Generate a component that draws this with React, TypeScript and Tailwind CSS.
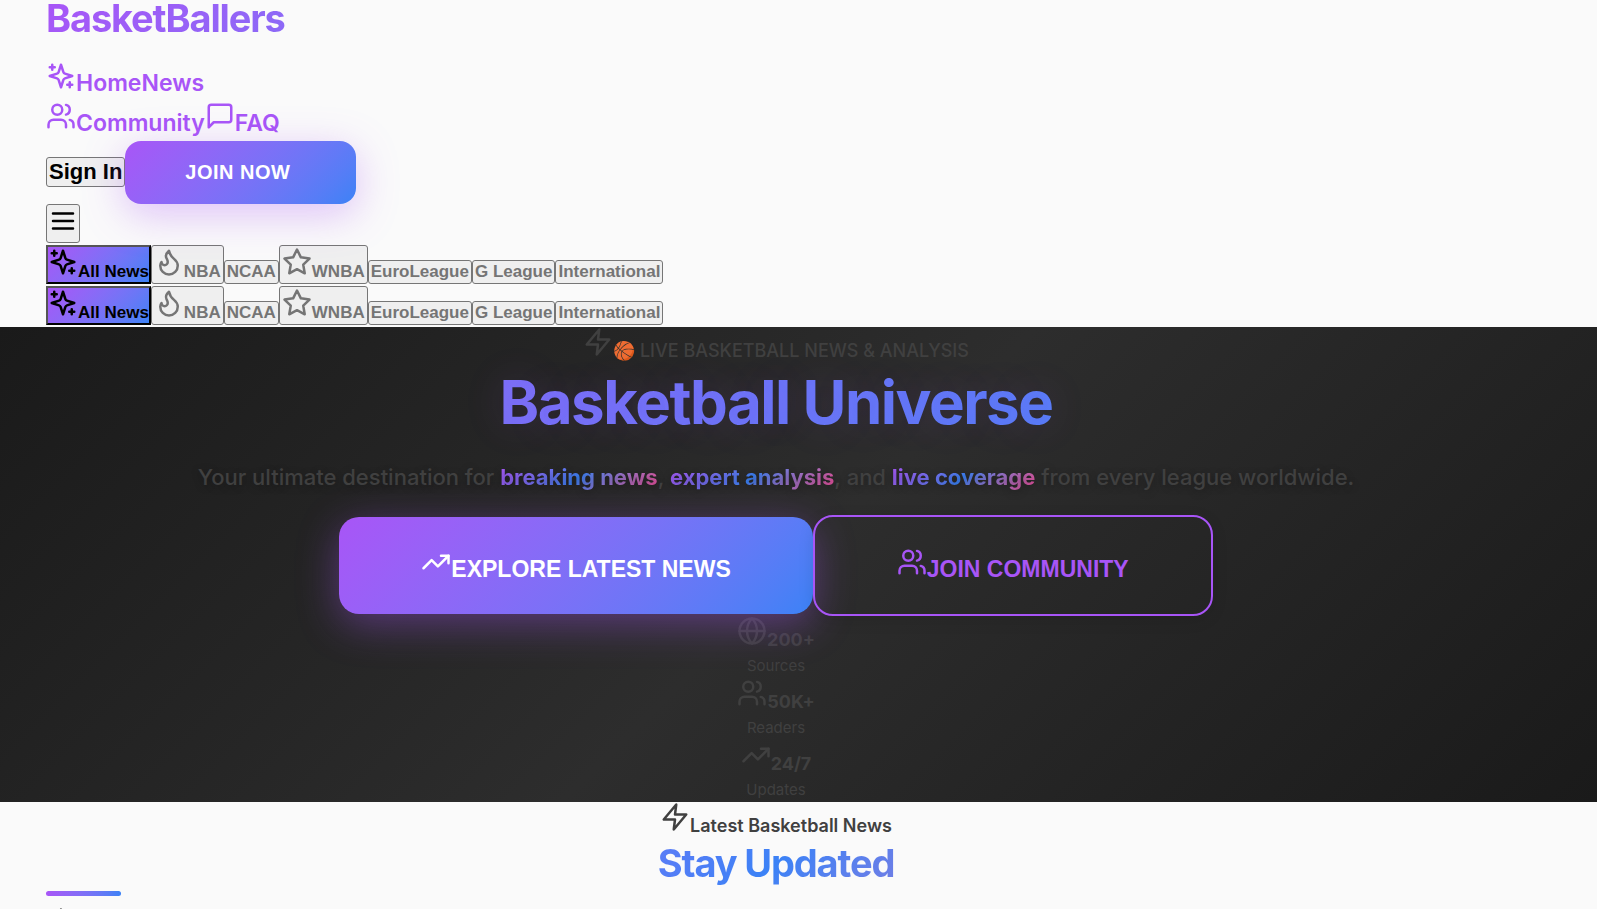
import type { ReactNode } from "react";
import { Globe, TrendingUp, Users } from "lucide-react";

function Icon({ children }: { children: ReactNode }) {
  return (
    <svg
      width={30}
      height={30}
      viewBox="0 0 24 24"
      fill="none"
      stroke="currentColor"
      strokeWidth={2}
      strokeLinecap="round"
      strokeLinejoin="round"
      aria-hidden="true"
      className="inline-block align-baseline"
    >
      {children}
    </svg>
  );
}

const Sparkles = () => (
  <Icon>
    <path d="m12 3-1.912 5.813a2 2 0 0 1-1.275 1.275L3 12l5.813 1.912a2 2 0 0 1 1.275 1.275L12 21l1.912-5.813a2 2 0 0 1 1.275-1.275L21 12l-5.813-1.912a2 2 0 0 1-1.275-1.275L12 3Z" />
    <path d="M5 3v4M19 17v4M3 5h4M17 19h4" />
  </Icon>
);

const Flame = () => (
  <Icon>
    <path d="M8.5 14.5A2.5 2.5 0 0 0 11 12c0-1.38-.5-2-1-3-1.072-2.143-.224-4.054 2-6 .5 2.5 2 4.9 4 6.5 2 1.6 3 3.5 3 5.5a7 7 0 1 1-14 0c0-1.153.433-2.294 1-3a2.5 2.5 0 0 0 2.5 2.5z" />
  </Icon>
);

const Star = () => (
  <Icon>
    <polygon points="12 2 15.09 8.26 22 9.27 17 14.14 18.18 21.02 12 17.77 5.82 21.02 7 14.14 2 9.27 8.91 8.26 12 2" />
  </Icon>
);

const Zap = () => (
  <Icon>
    <polygon points="13 2 3 14 12 14 11 22 21 10 12 10 13 2" />
  </Icon>
);

const MessageSquare = () => (
  <Icon>
    <path d="M21 15a2 2 0 0 1-2 2H7l-4 4V5a2 2 0 0 1 2-2h14a2 2 0 0 1 2 2z" />
  </Icon>
);

const MenuIcon = () => (
  <Icon>
    <path d="M4 6h16M4 12h16M4 18h16" />
  </Icon>
);

const categories = [
  { label: "All News", icon: <Sparkles />, active: true },
  { label: "NBA", icon: <Flame /> },
  { label: "NCAA" },
  { label: "WNBA", icon: <Star /> },
  { label: "EuroLeague" },
  { label: "G League" },
  { label: "International" },
];

const stats = [
  { value: "200+", label: "Sources", icon: Globe },
  { value: "50K+", label: "Readers", icon: Users },
  { value: "24/7", label: "Updates", icon: TrendingUp },
];

function CategoryBar() {
  return (
    <div className="flex items-baseline h-[41px]">
      {categories.map(({ label, icon, active }) => (
        <button
          key={label}
          className={
            active
              ? "border-2 border-t-[#555] border-l-[#555] border-r-black border-b-black bg-linear-135 from-[#a855f7] to-[#3b82f6] text-black text-[17px] leading-5 font-bold"
              : "border border-[#767676] rounded-[3px] bg-[#efefef] text-[#757575] text-[17px] leading-5 font-bold px-[2px] py-px"
          }
        >
          {icon}
          {label}
        </button>
      ))}
    </div>
  );
}

function Highlight({ children }: { children: string }) {
  return (
    <strong className="font-bold text-transparent bg-clip-text bg-linear-135 from-[#a855f7] via-[#3b82f6] to-[#ec4899]">
      {children}
    </strong>
  );
}

export default function App() {
  return (
    <div className="min-h-screen bg-[#fafafa] text-[#404040] font-['Inter',sans-serif]">
      <header className="pl-[46px] pr-[91px]">
        <h1 className="h-[61px] text-[38px] leading-[37px] font-bold tracking-[-0.03em] text-transparent bg-clip-text bg-linear-135 from-[#a855f7] via-[#3b82f6] to-[#ec4899]">
          BasketBallers
        </h1>

        <nav className="text-[23px] leading-[38px] font-semibold text-[#a855f7]">
          <div className="h-10">
            <a href="#home"><Sparkles />Home</a>
            <a href="#news">News</a>
          </div>
          <div className="h-10">
            <a href="#community"><Users size={30} className="inline-block align-baseline" />Community</a>
            <a href="#faq"><MessageSquare />FAQ</a>
          </div>
        </nav>

        <div className="font-['Liberation_Sans',sans-serif]">
          <div className="flex items-baseline">
            <button className="border border-[#767676] rounded-[3px] bg-[#efefef] px-[2px] text-[22px] leading-7 font-bold text-black">
              Sign In
            </button>
            <button className="relative rounded-2xl bg-linear-135 from-[#a855f7] to-[#3b82f6] pl-[60px] pr-[66px] py-[18px] text-xl leading-[27px] font-bold tracking-wide text-white shadow-[0_10px_40px_rgba(168,85,247,0.35)]">
              JOIN NOW
            </button>
          </div>
          <button aria-label="Menu" className="block mb-[2px] border border-[#767676] rounded-[3px] bg-[#efefef] px-px pt-px pb-[6px] leading-[30px] text-black">
            <span className="flex"><MenuIcon /></span>
          </button>
          <CategoryBar />
          <CategoryBar />
        </div>
      </header>

      <section className="pl-[46px] pr-[91px] bg-linear-135 from-[#1a1a1a] via-[#2d2d2d] to-[#1a1a1a] text-center">
        <p className="h-10 text-lg leading-[30px] font-medium">
          <Zap />
          🏀 LIVE BASKETBALL NEWS &amp; ANALYSIS
        </p>
        <h2 className="text-[60px] leading-[70px] font-bold tracking-tight text-transparent bg-clip-text bg-linear-135 from-[#9063f7] to-[#3b82f6] to-90% [text-shadow:0_0_40px_rgba(168,85,247,0.15)]">
          Basketball Universe
        </h2>
        <p className="pt-5 pb-[18px] text-[22px] leading-10 font-medium [text-shadow:0_2px_8px_rgba(0,0,0,0.3)]">
          Your ultimate destination for <Highlight>breaking news</Highlight>, <Highlight>expert analysis</Highlight>, and{" "}
          <Highlight>live coverage</Highlight> from every league worldwide.
        </p>
        <div className="flex justify-center items-center font-['Liberation_Sans',sans-serif] text-[23px] leading-[31px] font-bold">
          <button className="relative rounded-[20px] bg-linear-135 from-[#a855f7] to-[#3b82f6] px-[82px] pt-[30px] pb-[29px] text-white shadow-[0_10px_40px_rgba(168,85,247,0.4)]">
            <TrendingUp size={30} className="inline-block align-baseline" />
            EXPLORE LATEST NEWS
          </button>
          <button className="relative rounded-[20px] border-2 border-[#a855f7] px-[82px] pt-[30px] pb-[29px] text-[#a855f7] shadow-[0_4px_16px_rgba(0,0,0,0.1)]">
            <Users size={30} className="inline-block align-baseline" />
            JOIN COMMUNITY
          </button>
        </div>
        {stats.map(({ value, label, icon: StatIcon }) => (
          <div key={label}>
            <div className="h-[37px] text-lg leading-[30px] font-bold">
              <StatIcon size={30} className="inline-block align-baseline" />
              {value}
            </div>
            <div className="text-[15px] leading-[25px]">{label}</div>
          </div>
        ))}
      </section>

      <section className="pl-[46px] pr-[91px]">
        <p className="h-10 text-center text-lg leading-[30px] font-semibold">
          <Zap />
          Latest Basketball News
        </p>
        <h2 className="text-center text-[38px] leading-[43px] font-bold tracking-[-0.03em] text-transparent bg-clip-text bg-linear-135 from-[#a855f7] via-[#3b82f6] to-[#ec4899]">
          Stay Updated
        </h2>
        <div className="mt-[6px] mb-[11px] h-[5px] w-[75px] rounded-full bg-linear-90 from-[#a855f7] to-[#3b82f6]" />
        <Star />
      </section>
    </div>
  );
}
